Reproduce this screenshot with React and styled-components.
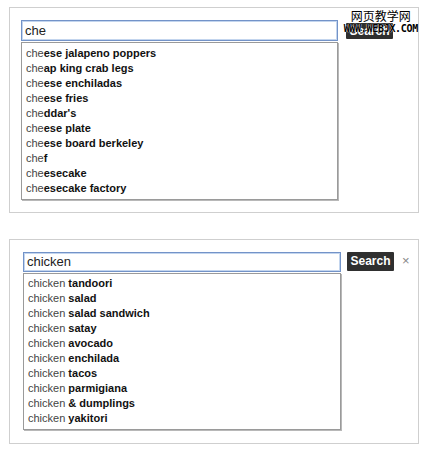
import React from "react";
import styled, { createGlobalStyle } from "styled-components";

const GlobalStyle = createGlobalStyle`
  body {
    margin: 0;
    background: #fff;
    font-family: "Liberation Sans", Arial, sans-serif;
  }
`;

const Page = styled.div`
  display: flex;
  flex-direction: column;
  gap: 26px;
  padding: 7px 0 0 9px;
  width: 410px;
`;

const Panel = styled.div`
  position: relative;
  box-sizing: border-box;
  height: ${(p) => p.$height}px;
  border: 1px solid #cfcfcf;
  padding: 12px 0 0 ${(p) => p.$inset}px;
`;

const Bar = styled.div`
  display: flex;
  align-items: flex-start;
`;

const Field = styled.div`
  display: flex;
  flex-direction: column;
  gap: 1px;
  width: ${(p) => p.$width}px;
`;

const Input = styled.div`
  box-sizing: border-box;
  height: ${(p) => p.$height}px;
  border: 1px solid #7393c8;
  box-shadow: 0 0 0 1px #c3d5ee inset;
  padding: 0 3px;
  font-size: 13px;
  line-height: ${(p) => p.$height - 2}px;
  color: #222;
`;

const Menu = styled.ul`
  list-style: none;
  margin: 0;
  padding: ${(p) => p.$padTop}px 0 3px 4px;
  border: 1px solid #9a9a9a;
  box-shadow: 1px 1px 0 #b8b8b8;
`;

const Item = styled.li`
  height: 15px;
  line-height: 15px;
  font-size: 11px;
  color: #444;
  white-space: nowrap;

  b {
    color: #111;
  }
`;

const Button = styled.button`
  margin: ${(p) => p.$top}px 0 0 ${(p) => p.$gap}px;
  width: 47px;
  height: ${(p) => p.$height}px;
  padding: 0;
  border: none;
  border-radius: 1px;
  background: #2f2f2f;
  color: #fff;
  font-family: "Liberation Sans", Arial, sans-serif;
  font-size: 12px;
  font-weight: bold;
  line-height: ${(p) => p.$height}px;
`;

const Close = styled.span`
  margin: 2px 0 0 8px;
  font-size: 13px;
  line-height: 14px;
  color: #888;
`;

const Watermark = styled.div`
  position: absolute;
  top: 0;
  right: 0;
  display: flex;
  flex-direction: column;
  align-items: center;
  color: #000;
  text-shadow: 0 0 1px #fff, 0 0 1px #fff;
`;

const WatermarkTitle = styled.span`
  font-family: "Noto Sans CJK SC", sans-serif;
  font-size: 12px;
  line-height: 15px;
  letter-spacing: 0;
`;

const WatermarkUrl = styled.span`
  font-family: "DejaVu Sans Mono", monospace;
  font-size: 10px;
  font-weight: bold;
  line-height: 12px;
  letter-spacing: -0.3px;
`;

const cheese = [
  ["che", "ese jalapeno poppers"],
  ["che", "ap king crab legs"],
  ["che", "ese enchiladas"],
  ["che", "ese fries"],
  ["che", "ddar's"],
  ["che", "ese plate"],
  ["che", "ese board berkeley"],
  ["che", "f"],
  ["che", "esecake"],
  ["che", "esecake factory"],
];

const chicken = [
  "tandoori",
  "salad",
  "salad sandwich",
  "satay",
  "avocado",
  "enchilada",
  "tacos",
  "parmigiana",
  "& dumplings",
  "yakitori",
].map((s) => ["chicken ", s]);

function Suggest({
  query,
  items,
  inset,
  width,
  height,
  inputHeight,
  menuPad,
  buttonTop,
  buttonGap,
  buttonHeight,
  showClose,
  children,
}) {
  return (
    <Panel $inset={inset} $height={height}>
      <Bar>
        <Field $width={width}>
          <Input $height={inputHeight}>{query}</Input>
          <Menu $padTop={menuPad}>
            {items.map(([typed, rest]) => (
              <Item key={typed + rest}>
                {typed}
                <b>{rest}</b>
              </Item>
            ))}
          </Menu>
        </Field>
        <Button $top={buttonTop} $gap={buttonGap} $height={buttonHeight}>
          Search
        </Button>
        {showClose && <Close>×</Close>}
      </Bar>
      {children}
    </Panel>
  );
}

export default function App() {
  return (
    <>
      <GlobalStyle />
      <Page>
        <Suggest
          query="che"
          items={cheese}
          inset={11}
          width={317}
          height={206}
          inputHeight={21}
          menuPad={3}
          buttonTop={3}
          buttonGap={8}
          buttonHeight={16}
        >
          <Watermark>
            <WatermarkTitle>网页教学网</WatermarkTitle>
            <WatermarkUrl>WWW.WEBJX.COM</WatermarkUrl>
          </Watermark>
        </Suggest>
        <Suggest
          query="chicken"
          items={chicken}
          inset={13}
          width={318}
          height={205}
          inputHeight={20}
          menuPad={2}
          buttonTop={0}
          buttonGap={6}
          buttonHeight={19}
          showClose
        />
      </Page>
    </>
  );
}
